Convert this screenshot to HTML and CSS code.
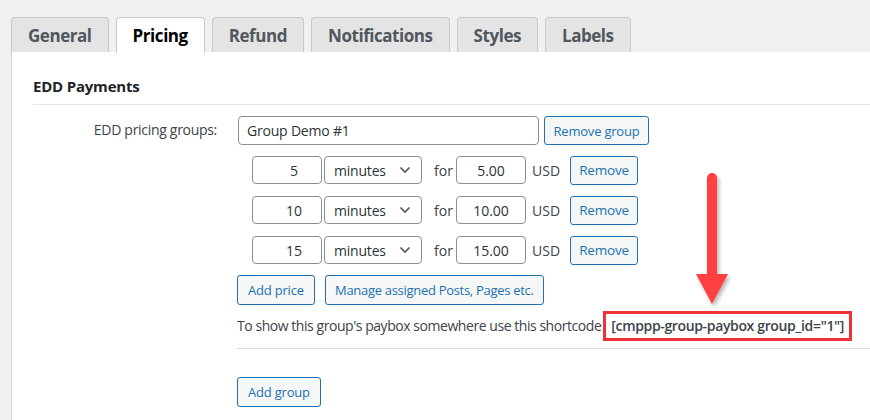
FILE: index.html
```html
<!DOCTYPE html>
<html>
<head>
<meta charset="utf-8">
<link rel="stylesheet" href="styles.css">
</head>
<body>
<nav class="tabs">
  <span class="tab">General</span>
  <span class="tab active">Pricing</span>
  <span class="tab">Refund</span>
  <span class="tab">Notifications</span>
  <span class="tab">Styles</span>
  <span class="tab">Labels</span>
</nav>
<div class="panel">
  <h2 class="section-title">EDD Payments</h2>
  <div class="form-row">
    <div class="label">EDD pricing groups:</div>
    <div class="field">
      <div class="group-head">
        <input class="text group-name" type="text" value="Group Demo #1">
        <button class="btn btn-group">Remove group</button>
      </div>
      <div class="prices">
        <div class="price-row">
          <input class="text num" type="text" value="5">
          <div class="select"><span>minutes</span><svg width="12" height="8" viewBox="0 0 12 8"><path d="M1.5 1.5 L6 6 L10.5 1.5" fill="none" stroke="#50575e" stroke-width="1.6"/></svg></div>
          <span class="for">for</span>
          <input class="text price" type="text" value="5.00">
          <span class="cur">USD</span>
          <button class="btn btn-remove">Remove</button>
        </div>
        <div class="price-row">
          <input class="text num" type="text" value="10">
          <div class="select"><span>minutes</span><svg width="12" height="8" viewBox="0 0 12 8"><path d="M1.5 1.5 L6 6 L10.5 1.5" fill="none" stroke="#50575e" stroke-width="1.6"/></svg></div>
          <span class="for">for</span>
          <input class="text price" type="text" value="10.00">
          <span class="cur">USD</span>
          <button class="btn btn-remove">Remove</button>
        </div>
        <div class="price-row">
          <input class="text num" type="text" value="15">
          <div class="select"><span>minutes</span><svg width="12" height="8" viewBox="0 0 12 8"><path d="M1.5 1.5 L6 6 L10.5 1.5" fill="none" stroke="#50575e" stroke-width="1.6"/></svg></div>
          <span class="for">for</span>
          <input class="text price" type="text" value="15.00">
          <span class="cur">USD</span>
          <button class="btn btn-remove">Remove</button>
        </div>
      </div>
      <div class="actions">
        <button class="btn">Add price</button>
        <button class="btn btn-manage">Manage assigned Posts, Pages etc.</button>
      </div>
      <div class="shortcode-line">
        <span>To show this group's paybox somewhere use this shortcode</span>
        <span class="shortcode">[cmppp-group-paybox group_id="1"]</span>
      </div>
      <div class="sep"></div>
      <div class="add-group">
        <button class="btn">Add group</button>
      </div>
    </div>
  </div>
  <svg class="arrow" width="40" height="140" viewBox="0 0 40 140">
    <defs>
      <filter id="sh" x="-50%" y="-20%" width="200%" height="140%">
        <feDropShadow dx="2" dy="3" stdDeviation="2" flood-color="#000" flood-opacity="0.3"/>
      </filter>
    </defs>
    <g filter="url(#sh)" fill="#fe4141">
      <rect x="15" y="4" width="10" height="106" rx="5"/>
      <polygon points="4,105 36,105 20,135"/>
    </g>
  </svg>
</div>
</body>
</html>
```
FILE: styles.css
```css
html, body {
  margin: 0;
  padding: 0;
}
body {
  background: #f0f0f1;
  font-family: "Open Sans", "Noto Sans", sans-serif;
  font-size: 13px;
  color: #3c434a;
  width: 870px;
  height: 420px;
  overflow: hidden;
}
.tabs {
  display: flex;
  gap: 7px;
  padding: 17px 0 0 11px;
  height: 35px;
  box-sizing: content-box;
}
.tab {
  display: flex;
  align-items: center;
  box-sizing: border-box;
  height: 36px;
  padding: 0 16px;
  border: 1px solid #c9c9cb;
  border-bottom: none;
  border-radius: 4px 4px 0 0;
  background: #e4e4e5;
  color: #50575e;
  font-weight: 700;
  font-size: 17px;
  letter-spacing: -0.45px;
}
.tab.active {
  background: #fff;
  color: #000;
  position: relative;
  z-index: 1;
}
.panel {
  position: relative;
  margin-left: 11px;
  background: #fff;
  border-left: 1px solid #d5d5d7;
  padding: 24px 0 0 21px;
  height: 368px;
  box-sizing: border-box;
}
.section-title {
  margin: 0;
  font-size: 15px;
  font-weight: 700;
  color: #1d2327;
  line-height: 20px;
  padding-bottom: 8px;
  border-bottom: 1px solid #e6e6e6;
  letter-spacing: -0.2px;
}
.form-row {
  display: flex;
  padding-top: 11px;
}
.label {
  width: 184px;
  text-align: right;
  padding-top: 5px;
  line-height: 18px;
  padding-right: 20px;
  font-size: 14px;
  letter-spacing: -0.3px;
}
.field {
  flex: 1;
  display: flex;
  flex-direction: column;
}
.group-head {
  display: flex;
  align-items: flex-start;
  gap: 5px;
}
input.text {
  box-sizing: border-box;
  height: 28px;
  border: 1px solid #8c8f94;
  border-radius: 4px;
  font-family: inherit;
  font-size: 14px;
  color: #2c3338;
  padding: 0 8px;
  margin: 0;
  background: #fff;
}
.group-name {
  width: 301px;
  height: 29px !important;
  margin-left: 1px !important;
  letter-spacing: -0.2px;
}
.btn {
  box-sizing: border-box;
  height: 30px;
  border: 1px solid #2271b1;
  border-radius: 3px;
  background: #f6f7f7;
  color: #2271b1;
  font-family: inherit;
  font-size: 13px;
  padding: 0 10px;
  margin: 0;
  letter-spacing: -0.2px;
  cursor: pointer;
}
.btn-group {
  height: 29px;
  width: 105px;
  padding: 0;
}
.btn-manage {
  width: 219px;
  padding: 0;
  letter-spacing: -0.3px;
}
.prices {
  display: flex;
  flex-direction: column;
  gap: 12px;
  margin-top: 11px;
  padding-left: 15px;
}
.price-row {
  display: flex;
  align-items: center;
  height: 28px;
}
.num {
  width: 70px;
  text-align: center;
  padding-right: 0 !important;
  padding-left: 14px !important;
}
.select {
  box-sizing: border-box;
  width: 98px;
  height: 28px;
  margin-left: 2px;
  border: 1px solid #8c8f94;
  border-radius: 4px;
  display: flex;
  align-items: center;
  justify-content: space-between;
  padding: 0 10px 0 9px;
  font-size: 14px;
  color: #2c3338;
  letter-spacing: -0.2px;
}
.for {
  margin-left: 12px;
  width: 22px;
  font-size: 14px;
}
.price {
  width: 70px;
  text-align: center;
}
.cur {
  margin-left: 6px;
  width: 38px;
  font-size: 14px;
}
.btn-remove {
  width: 68px;
  height: 29px;
  padding: 0;
  font-size: 13.5px;
}
.actions {
  display: flex;
  gap: 10px;
  margin-top: 11px;
}
.shortcode-line {
  display: flex;
  align-items: center;
  margin-top: 5px;
  height: 31px;
  font-size: 14px;
  letter-spacing: -0.45px;
  white-space: nowrap;
}
.shortcode {
  margin-left: 2px;
  border: 3px solid #ee3338;
  padding: 2px 5px 3px 5px;
  font-weight: 600;
  color: #3c434a;
  letter-spacing: -0.35px;
}
.sep {
  margin-top: 7px;
  border-top: 1px solid #dcdcde;
}
.add-group {
  margin-top: 28px;
}
.arrow {
  position: absolute;
  left: 680px;
  top: 117px;
}
```
